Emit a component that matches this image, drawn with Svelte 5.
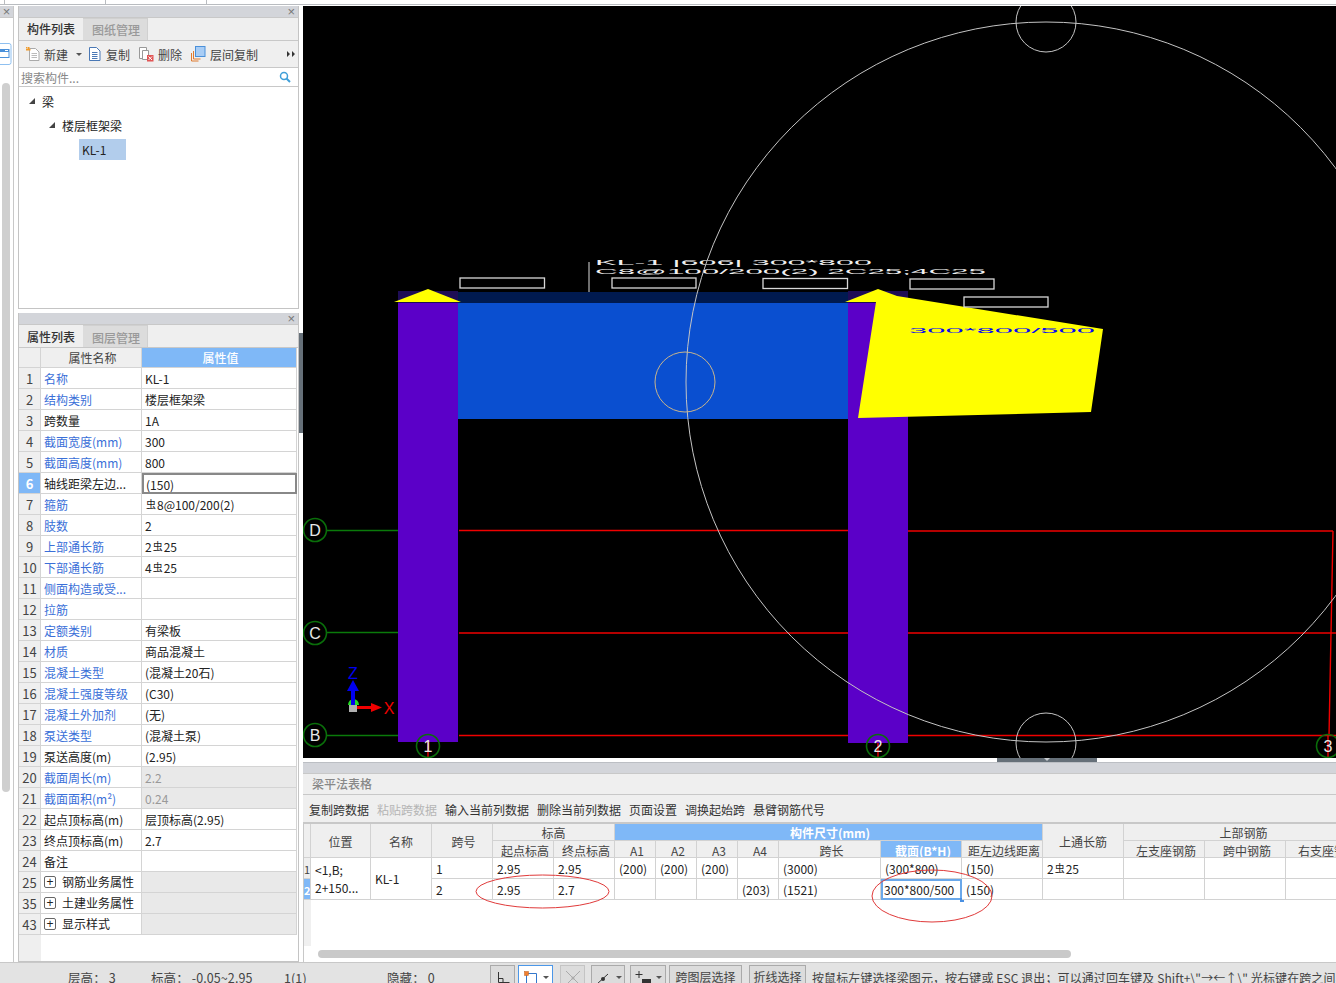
<script>
  const props = [
    ['1','名称','KL-1',1],['2','结构类别','楼层框架梁',1],['3','跨数量','1A',0],['4','截面宽度(mm)','300',1],['5','截面高度(mm)','800',1],
    ['6','轴线距梁左边...','(150)',0],['7','箍筋','S8@100/200(2)',1],['8','肢数','2',1],['9','上部通长筋','2S25',1],['10','下部通长筋','4S25',1],
    ['11','侧面构造或受...','',1],['12','拉筋','',1],['13','定额类别','有梁板',1],['14','材质','商品混凝土',1],['15','混凝土类型','(混凝土20石)',1],
    ['16','混凝土强度等级','(C30)',1],['17','混凝土外加剂','(无)',1],['18','泵送类型','(混凝土泵)',1],['19','泵送高度(m)','(2.95)',0],
    ['20','截面周长(m)','2.2',2],['21','截面面积(m²)','0.24',2],['22','起点顶标高(m)','层顶标高(2.95)',0],['23','终点顶标高(m)','2.7',0],['24','备注','',0],
    ['25','钢筋业务属性','',3],['35','土建业务属性','',3],['43','显示样式','',3]
  ];
  const spans = (v) => v.split('S');
</script>

<div class="app">
  <div class="topstrip"><i></i><i></i><i></i></div>
  <div class="main">
    <aside class="farleft">
      <div class="phead small"><span class="x">×</span></div>
      <div class="fl-body">
        <svg class="fl-icon" width="12" height="22" viewBox="0 0 12 22"><rect x="-4" y="0.5" width="15" height="21" rx="2" fill="#fff" stroke="#8fc0f0"/><rect x="-2" y="6.500" width="11" height="8" fill="#fff" stroke="#4a90d9"/><rect x="-2" y="6" width="11" height="3" fill="#4a90d9"/><rect x="5" y="7" width="3" height="1" fill="#fff"/></svg>
        <div class="fl-scroll"></div>
      </div>
    </aside>
    <div class="left">
      <section class="panel p1">
        <div class="phead"><span class="x">×</span></div>
        <div class="tabs"><span class="tab on">构件列表</span><span class="tab">图纸管理</span></div>
        <div class="tools">
          <span class="tool"><svg width="16" height="16" viewBox="0 0 16 16"><path d="M4.500 2.500h6l3.500 3.500v8.500H4.500z" fill="#fff" stroke="#aaa"/><path d="M6.500 7.500h5.500M6.500 9.500h5.500M6.500 11.500h5.500" stroke="#bbb"/><path d="M1 1h1.500v1.500H1zM3 1h1.500v1.500H3zM1 3h1.500v1.500H1zM4 3h1.500v1.500H4zM2.500 2.500h2v2h-2z" fill="#f09a2a"/></svg>新建<i class="caret"></i></span>
          <span class="tool t2"><svg width="15" height="16" viewBox="0 0 15 16"><path d="M1.500 1.500h7l3.500 3.500v9.500H1.500z" fill="#fff" stroke="#4a78b5"/><path d="M4 6.500h5.500M4 8.500h5.500M4 10.500h5.500M4 12.500h5.500" stroke="#4a78b5"/></svg>复制</span>
          <span class="tool t3"><svg width="15" height="16" viewBox="0 0 15 16"><path d="M0.500 1.500h7v11h-7z" fill="#fff" stroke="#999"/><path d="M3.500 4.500h6v9h-6z" fill="#fff" stroke="#999"/><rect x="8" y="9" width="6.500" height="6.500" fill="#e25555"/><path d="M9.500 10.500l3.500 3.500M13 10.500l-3.500 3.500" stroke="#fff"/></svg>删除</span>
          <span class="tool t3"><svg width="15" height="16" viewBox="0 0 15 16"><path d="M0.500 7v8h7" fill="none" stroke="#e07a2f"/><path d="M2.500 5v8h7" fill="none" stroke="#e07a2f"/><rect x="4.500" y="0.500" width="9.500" height="10" fill="#a9cdf5" stroke="#4a90d9"/></svg>层间复制</span>
          <svg class="more" width="8" height="6" viewBox="0 0 8 6"><path d="M0 0l3 3-3 3zM5 0l3 3-3 3z" fill="#333"/></svg>
        </div>
        <div class="search"><span>搜索构件...</span><svg width="12" height="12" viewBox="0 0 12 12"><circle cx="5" cy="5" r="3.500" fill="none" stroke="#3f9fd8" stroke-width="1.500"/><path d="M7.500 7.500l3.500 3.500" stroke="#3f9fd8" stroke-width="2"/></svg></div>
        <div class="tree">
          <div class="node n1"><i class="tri"></i>梁</div>
          <div class="node n2"><i class="tri"></i>楼层框架梁</div>
          <div class="node n3"><span>KL-1</span></div>
        </div>
      </section>
      <section class="panel p2">
        <div class="phead"><span class="x">×</span></div>
        <div class="tabs"><span class="tab on">属性列表</span><span class="tab">图层管理</span></div>
        <div class="ptable">
          <div class="prow head"><div class="pn"></div><div class="pk">属性名称</div><div class="pv">属性值</div></div>
          {#each props as p}
            <div class="prow" class:sel={p[0]==='6'}>
              <div class="pn">{p[0]}</div>
              <div class="pk" class:blue={p[3]===1||p[3]===2} class:grp={p[3]===3}>{#if p[3]===3}<i class="plus">+</i>{/if}{p[1]}</div>
              <div class="pv" class:shade={p[3]===2||p[3]===3} class:edit={p[0]==='6'}>
                {#if p[2].includes('S')}{spans(p[2])[0]}<span class="rebar">虫</span>{spans(p[2])[1]}{:else}{p[2]}{/if}
              </div>
            </div>
          {/each}
        </div>
      </section>
    </div>
    <div class="sash"><div class="sgrip"></div></div>
    <div class="right">
      <div class="canvas">
        <svg width="1033" height="752" viewBox="303 6 1033 752" class="draw">
          <g fill="none" stroke-width="1.400">
            <path d="M327 530.500H398M327 632.500H398M327 735.500H398" stroke="#0a7a0a"/>
            <path d="M459 530.500H908M908 531H1333M459 633H1336M459 735.500H1336" stroke="#f00000"/>
          </g>
          <path d="M1333 531L1329 736M1328 736V758M428 736V758M878 736V758" stroke="#f00000" stroke-width="1.400" fill="none"/>
          <rect x="398" y="303" width="60" height="439" fill="#5b00c8"/>
          <rect x="848" y="303" width="60" height="440" fill="#5b00c8"/>
          <rect x="398" y="291" width="60" height="12" fill="#1e0d55"/>
          <rect x="848" y="291" width="60" height="12" fill="#1e0d55"/>
          <rect x="458" y="292" width="390" height="11" fill="#001a50"/>
          <rect x="458" y="303" width="390" height="116" fill="#0a4fd0"/>
          <path d="M394 302L428 289L461 302Z" fill="#ffff00"/>
          <path d="M845 302L878 289L897 296L1103 329L1091 412L858 418L876 302Z" fill="#ffff00"/>
          <g fill="none" stroke="#d8d8d8" stroke-width="1.300">
            <rect x="460" y="278" width="84.500" height="10"/><rect x="612" y="278" width="84" height="10"/>
            <rect x="763" y="278.500" width="84.500" height="10"/><rect x="910" y="279" width="84" height="10"/>
            <rect x="964" y="297" width="84" height="10"/>
          </g>
          <path d="M589 262V292" stroke="#ddd" stroke-width="1"/>
          <text class="cad c1" transform="translate(595 265) scale(1 .8)" textLength="277" lengthAdjust="spacingAndGlyphs">KL-1 |606| 300*800</text>
          <text class="cad c2" transform="translate(595 274) scale(1 .7)" textLength="391" lengthAdjust="spacingAndGlyphs">C8@100/200(2) 2C25;4C25</text>
          <text class="cad c3" transform="translate(909 333) scale(1 .7)" textLength="186" lengthAdjust="spacingAndGlyphs">300*800/500</text>
          <g fill="none" stroke="#c4c4c4">
            <ellipse cx="1046" cy="382" rx="360" ry="360"/>
            <circle cx="1046" cy="22" r="30"/>
            <circle cx="1046" cy="743" r="30"/>
            <circle cx="685" cy="382" r="30" stroke="#c8b48c"/>
          </g>
          <g fill="none" stroke="#0a6e0a" stroke-width="1.600">
            <circle cx="315" cy="530" r="11.500"/><circle cx="315" cy="633" r="11.500"/><circle cx="315" cy="735" r="11.500"/>
            <circle cx="428" cy="746" r="11.500"/><circle cx="878" cy="746" r="11.500"/><circle cx="1328" cy="746" r="11.500"/>
          </g>
          <g class="ax">
            <text x="315" y="536">D</text><text x="315" y="639">C</text><text x="315" y="741">B</text>
            <text x="428" y="752">1</text><text x="878" y="752">2</text><text x="1328" y="752">3</text>
          </g>
          <path d="M348 705a5.500 6 0 0 1 11 0z" fill="#22dd22"/>
          <rect x="349" y="705" width="8" height="7" fill="#b0b0b0"/>
          <path d="M351 705V691h-4l6-11 6 11h-4v14z" fill="#0000f0"/>
          <path d="M357 706h14v-3l11 4.500-11 4.500v-3h-14z" fill="#f00000"/>
          <text class="uz" x="353" y="679">Z</text>
          <text class="ux" x="389" y="714">X</text>
        </svg>
      </div>
      <div class="sepbar"><div class="grip"></div></div>
      <section class="lower">
        <div class="ltitle">梁平法表格</div>
        <div class="lbtns">
          <span>复制跨数据</span><span class="off">粘贴跨数据</span><span>输入当前列数据</span><span>删除当前列数据</span><span>页面设置</span><span>调换起始跨</span><span>悬臂钢筋代号</span>
        </div>
        <div class="gridwrap">
          <div class="grid">
            <div class="c h a-corner"></div>
            <div class="c h a-pos">位置</div>
            <div class="c h a-name">名称</div>
            <div class="c h a-span">跨号</div>
            <div class="c h a-elev">标高</div>
            <div class="c h act b a-size">构件尺寸(mm)</div>
            <div class="c h a-top">上通长筋</div>
            <div class="c h a-upper">上部钢筋</div>
            {#each ['起点标高','终点标高','A1','A2','A3','A4','跨长'] as t}<div class="c h sub">{t}</div>{/each}
            <div class="c h sub act b">截面(B*H)</div>
            <div class="c h sub">距左边线距离</div>
            {#each ['左支座钢筋','跨中钢筋','右支座钢筋'] as t}<div class="c h sub">{t}</div>{/each}

            <div class="c rn">1</div>
            <div class="c l loc a-rpos">&lt;1,B;<br>2+150...</div>
            <div class="c l loc a-rname">KL-1</div>
            {#each ['1','2.95','2.95','(200)','(200)','(200)','','(3000)','(300*800)','(150)'] as t}<div class="c l">{t}</div>{/each}
            <div class="c l">2<span class="rebar">虫</span>25</div>
            <div class="c l"></div><div class="c l"></div><div class="c l"></div>

            <div class="c rn act2">2</div>
            {#each ['2','2.95','2.7','','','','(203)','(1521)'] as t}<div class="c l">{t}</div>{/each}
            <div class="c l cur">300*800/500<i class="handle"></i></div>
            <div class="c l">(150)</div>
            <div class="c l"></div><div class="c l"></div><div class="c l"></div><div class="c l"></div>
          </div>
          <svg class="marks" width="1033" height="90" viewBox="303 840 1033 90">
            <ellipse cx="542.500" cy="891.500" rx="66.500" ry="16.500" fill="none" stroke="#e03a3a"/>
            <ellipse cx="932" cy="896" rx="60" ry="26" fill="none" stroke="#e03a3a"/>
          </svg>
          <div class="hscroll"></div>
        </div>
      </section>
    </div>
  </div>
  <footer class="status">
    <span class="s s1">层高：&nbsp;3</span><span class="s s2">标高：&nbsp;-0.05~2.95</span><span class="s s3">1(1)</span><span class="s s4">隐藏：&nbsp;0</span>
    <span class="bt b1"><svg width="16" height="16" viewBox="0 0 16 16"><path d="M3.500 2v10.500h11M3.500 8.500h4.500v4" fill="none" stroke="#333"/></svg></span>
    <span class="bt b2"><svg width="18" height="16" viewBox="0 0 18 16"><path d="M4.500 3.500h10v13M4.500 3.500v13" fill="none" stroke="#3377cc"/><rect x="2.500" y="1.500" width="4" height="4" fill="#f08030" stroke="#c06020" stroke-width=".5"/></svg><i class="caret"></i></span>
    <span class="bt b3"><svg width="18" height="16" viewBox="0 0 18 16"><path d="M2 1l14 14M16 1L2 15" stroke="#aaa"/><circle cx="9" cy="8" r="1.500" fill="#aaa"/></svg></span>
    <span class="bt b4"><svg width="18" height="16" viewBox="0 0 18 16"><path d="M2 14.500h14M2 14L13 4" fill="none" stroke="#333"/><circle cx="8" cy="9" r="2" fill="#333"/></svg><i class="caret"></i></span>
    <span class="bt b5"><svg width="18" height="16" viewBox="0 0 18 16"><path d="M4 1v7M0.500 4.500h7" stroke="#333"/><rect x="7" y="9" width="9" height="6" fill="#333"/></svg><i class="caret"></i></span>
    <span class="bt txt b6">跨图层选择</span><span class="bt txt b7">折线选择</span>
    <span class="msg">按鼠标左键选择梁图元，按右键或 ESC 退出；可以通过回车键及 Shift+\"→←↑\" 光标键在跨之间、</span>
  </footer>
</div>

<style>
  :global(body){margin:0;overflow:hidden;background:#fff}
  .app{width:1336px;height:983px;display:flex;flex-direction:column;overflow:hidden;font-family:"Noto Sans CJK SC","Liberation Sans",sans-serif;font-size:12px;color:#222;background:#fff}
  .topstrip{height:4px;border-bottom:1px solid #b9bcc0;margin-bottom:1px;background:#fff;flex:none;display:flex;padding-left:4px}
  .topstrip i{width:100px;height:4px;box-sizing:content-box;border-left:1px solid #b9bcc0;flex:none}
  .main{flex:1;display:flex;min-height:0;position:relative}
  .farleft{width:14px;flex:none;border-right:1px solid #c8c8c8;display:flex;flex-direction:column;box-sizing:border-box}
  .phead{height:11px;background:#d3d5da;display:flex;justify-content:flex-end;align-items:center;flex:none;padding-right:3px;border-bottom:1px solid #c8c8c8}
  .phead.small{justify-content:center;padding:0}
  .x{font:13px/10px "Liberation Sans",sans-serif;color:#777}
  .fl-body{flex:1;position:relative;display:flex;flex-direction:column;background:#fff}
  .fl-icon{margin-top:25px;flex:none;display:block}
  .fl-scroll{width:8px;height:709px;margin:18px 0 0 2px;background:#cfcfcf;border-radius:4px}
  .left{width:281px;margin-left:4px;flex:none;display:flex;flex-direction:column;height:100%;gap:4px}
  .panel{border:1px solid #c4c4c4;border-top:0;background:#fff;display:flex;flex-direction:column;box-sizing:border-box}
  .p1{height:303px;flex:none}
  .p2{flex:1;min-height:0}
  .tabs{height:22px;background:#efefef;display:flex;flex:none;border-bottom:1px solid #c8c8c8}
  .tab{width:65px;box-sizing:border-box;text-align:center;line-height:22px;color:#999;background:#dcdcdc;border:1px solid #d0d0d0;border-left:0;border-bottom:0;font-size:12px;font-weight:500;padding-left:2px}
  .tab.on{width:64px;color:#333;background:#efefef;border:0;padding-left:0}
  .p2 .tab{line-height:24px}
  .tools{height:26px;background:#efefef;display:flex;align-items:center;flex:none;border-bottom:1px solid #c8c8c8;color:#444}
  .tool{display:flex;align-items:center;gap:3px;margin-left:6px;white-space:nowrap}
  .t2{margin-left:6px}.t3{margin-left:9px;gap:4px}
  .caret{display:inline-block;width:0;height:0;border:3px solid transparent;border-top:3px solid #555;border-bottom:0;margin-left:5px}
  .more{margin-left:auto;margin-right:3px}
  .search{height:18px;display:flex;align-items:center;justify-content:space-between;padding:0 7px 0 2px;color:#888;border-bottom:1px solid #c8c8c8;flex:none}
  .tree{flex:1;color:#222}
  .node{display:flex;align-items:center;height:24px}
  .n1{padding-left:10px;margin-top:2px}.n2{padding-left:30px}.n3{padding-left:60px}
  .n3 span{background:#b2cdec;width:47px;height:21px;line-height:21px;padding-left:3px;box-sizing:border-box}
  .tri{width:0;height:0;border-left:6px solid transparent;border-bottom:6px solid #444;margin-right:7px}
  .ptable{flex:1;background:linear-gradient(90deg,#efefef 22px,#fff 22px);display:flex;flex-direction:column;padding-right:2px}
  .prow{display:grid;grid-template-columns:22px 101px 155px;height:21px;flex:none;box-sizing:border-box}
  .prow.head{height:20px}
  .prow>div{border-right:1px solid #d4d4d4;border-bottom:1px solid #d4d4d4;box-sizing:border-box;line-height:22px;white-space:nowrap;overflow:hidden}
  .pn{text-align:center;background:#efefef;color:#444;font-size:13px}
  .pk{padding-left:3px;background:#fff;color:#222}
  .pv{padding-left:3px;background:#fff;color:#222}
  .pk.blue{color:#3a6fd8}
  .pk.grp{display:flex;align-items:center}
  .plus{font:12px/10px "Liberation Sans",sans-serif;width:10px;height:10px;border:1px solid #666;border-radius:2px;text-align:center;margin:0 6px 0 0;font-style:normal;flex:none}
  .pv.shade{background:#e9e9e9;color:#999}
  .prow.head .pn,.prow.head .pk{background:#efefef;text-align:center;color:#444;line-height:20px}
  .prow.head .pv{background:#7fb8f7;color:#fff;text-align:center;font-weight:500;line-height:20px}
  .prow.sel .pn{background:#7fb8f7;color:#fff;font-weight:700}
  .prow .pv.edit{border:2px solid #888;padding-left:2px;line-height:19px}
  .rebar{font-size:10px;position:relative;top:-2px;margin:0 1px}
  .sash{width:4px;flex:none;background:#fff;position:relative}
  .sgrip{position:absolute;left:0;top:327px;width:4px;height:100px;background:#667079}
  .right{flex:1;min-width:0;display:flex;flex-direction:column}
  .canvas{height:752px;background:#000;flex:none;overflow:hidden}
  .draw{display:block}
  .cad{font-family:"Liberation Sans",sans-serif;fill:#f0f0f0}
  .c1{font-size:10px}.c2{font-size:10px}
  .cad.c3{font-size:10px;fill:#0808f0}
  .ax text{font:16px "Liberation Sans",sans-serif;fill:#e8e8e8;text-anchor:middle}
  .uz{font:16px "Liberation Sans",sans-serif;fill:#0000f0;text-anchor:middle}
  .ux{font:16px "Liberation Sans",sans-serif;fill:#f00000;text-anchor:middle}
  .sepbar{height:15px;background:linear-gradient(#fff 4px,#bcbfc4 4px,#bcbfc4 5px,#d3d5da 5px);flex:none;position:relative;border-bottom:1px solid #c8c8c8}
  .grip{position:absolute;left:694px;top:0;width:100px;height:4px;background:#667079}
  .grip::after{content:"";position:absolute;left:47px;top:0;border:3px solid transparent;border-top:3px solid #c8ccd0;border-bottom:0}
  .lower{flex:1;display:flex;flex-direction:column;min-height:0}
  .ltitle{height:20px;background:#efefef;color:#888;padding-left:9px;line-height:20px;border-bottom:1px solid #c8c8c8;flex:none;font-weight:500}
  .lbtns{height:26px;padding-top:1px;background:#efefef;display:flex;gap:8px;padding-left:6px;align-items:center;border-bottom:1px solid #c8c8c8;flex:none;color:#333;white-space:nowrap}
  .off{color:#b5b5b5}
  .gridwrap{flex:1;position:relative;border-left:1px solid #c8c8c8;border-top:1px solid #c8c8c8;overflow:hidden;min-height:0;background:linear-gradient(#f0f0f0,#f0f0f0) 0 0/7px 122px no-repeat}
  .grid{display:grid;grid-template-columns:7px 60px 61px 61px 61px 61px 41px 41px 41px 41px 102px 81px 81px 81px 81px 81px 81px;grid-template-rows:17px 17px 21px 21px;width:1100px}
  .a-corner{grid-area:1/1/3/2}.a-pos{grid-area:1/2/3/3}.a-name{grid-area:1/3/3/4}.a-span{grid-area:1/4/3/5}
  .a-elev{grid-area:1/5/2/7}.a-size{grid-area:1/7/2/14}.a-top{grid-area:1/14/3/15}.a-upper{grid-area:1/15/2/18}
  .a-rpos{grid-area:3/2/5/3}.a-rname{grid-area:3/3/5/4}
  .c{border-right:1px solid #d2d2d2;border-bottom:1px solid #d2d2d2;box-sizing:border-box;white-space:nowrap;overflow:hidden;line-height:22px;position:relative}
  .c.h{background:#efefef;text-align:center;color:#444;display:flex;align-items:center;justify-content:center;padding-top:2px}
  .c.sub{padding-left:4px;padding-top:4px}
  .a-upper{padding-right:3px}
  .a-size,.a-span{padding-left:3px}
  .c.act{background:#7fb8f7;color:#fff}
  .c.b{font-weight:700}
  .rn{background:#efefef;font-size:11px;text-align:center;color:#444}
  .rn.act2{background:#7fb8f7;color:#fff;font-weight:700}
  .l{padding-left:4px;background:#fff;color:#222}
  .loc{line-height:18px;white-space:normal;align-content:center}
  .cur{border:2px solid #6aa8ea;overflow:visible;line-height:18px;padding-left:1px}
  .handle{position:absolute;right:-4px;bottom:-4px;width:4px;height:4px;background:#4a90e2}
  .marks{position:absolute;left:-1px;top:16px;pointer-events:none}
  .hscroll{position:absolute;left:14px;bottom:4px;width:753px;height:8px;background:#c9c9c9;border-radius:4px}
  .status{height:21px;flex:none;background:#e3e3e3;color:#444;border-top:1px solid #c8c8c8;display:flex;align-items:flex-start;white-space:nowrap;box-sizing:border-box;overflow:hidden;padding-left:68px}
  .s{flex:none;height:20px;line-height:29px;font-size:12.500px;letter-spacing:.1px}
  .s1{width:83px}.s2{width:133px}.s3{width:103px}.s4{width:103px}
  .bt{height:24px;margin-top:2px;border:1px solid #aaa;box-sizing:border-box;display:flex;align-items:flex-start;justify-content:center;background:#dcdcdc;flex:none;padding-top:4px}
  .b1{width:25px}.b2{width:35px;margin-left:3px;background:#fff;border-color:#4c97e8}.b3{width:25px;margin-left:7px;border-color:#c4c4c4}.b4{width:34px;margin-left:6px}.b5{width:36px;margin-left:5px}
  .txt{padding-top:0;line-height:22px}
  .b6{width:73px;margin-left:3px}.b7{width:57px;margin-left:7px}
  .bt .caret{margin:6px 0 0 3px}
  .msg{margin-left:6px;line-height:29px;height:20px;font-size:12px;letter-spacing:.1px}
</style>
